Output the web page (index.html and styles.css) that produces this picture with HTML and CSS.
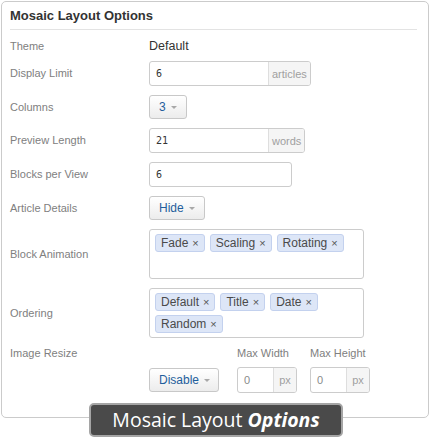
FILE: index.html
```html
<!DOCTYPE html>
<html>
<head>
<meta charset="utf-8">
<link rel="stylesheet" href="styles.css">
</head>
<body>
<div class="panel">
  <h2 class="title">Mosaic Layout Options</h2>
  <div class="form">
    <div class="row row-theme">
      <span class="label">Theme</span>
      <span class="value">Default</span>
    </div>
    <div class="row">
      <span class="label">Display Limit</span>
      <div class="input-group"><span class="field field-main mono">6</span><span class="addon">articles</span></div>
    </div>
    <div class="row">
      <span class="label">Columns</span>
      <div><span class="btn">3<i class="caret"></i></span></div>
    </div>
    <div class="row">
      <span class="label">Preview Length</span>
      <div class="input-group"><span class="field field-main mono">21</span><span class="addon">words</span></div>
    </div>
    <div class="row">
      <span class="label">Blocks per View</span>
      <div class="input-group"><span class="field field-wide mono">6</span></div>
    </div>
    <div class="row">
      <span class="label">Article Details</span>
      <div><span class="btn">Hide<i class="caret"></i></span></div>
    </div>
    <div class="row">
      <span class="label">Block Animation</span>
      <div class="tagbox">
        <span class="tag">Fade<span class="x">×</span></span>
        <span class="tag">Scaling<span class="x">×</span></span>
        <span class="tag">Rotating<span class="x">×</span></span>
      </div>
    </div>
    <div class="row">
      <span class="label">Ordering</span>
      <div class="tagbox">
        <span class="tag">Default<span class="x">×</span></span>
        <span class="tag">Title<span class="x">×</span></span>
        <span class="tag">Date<span class="x">×</span></span>
        <span class="tag">Random<span class="x">×</span></span>
      </div>
    </div>
    <div class="row row-top">
      <span class="label">Image Resize</span>
      <div class="resize">
        <span class="btn btn-disable">Disable<i class="caret"></i></span>
        <div class="group group-first">
          <span class="sublabel">Max Width</span>
          <div class="input-group input-tall"><span class="field field-small">0</span><span class="addon addon-px">px</span></div>
        </div>
        <div class="group">
          <span class="sublabel">Max Height</span>
          <div class="input-group input-tall"><span class="field field-small">0</span><span class="addon addon-px">px</span></div>
        </div>
      </div>
    </div>
  </div>
</div>
<div class="caption">Mosaic Layout <b><i>Options</i></b></div>
</body>
</html>
```

FILE: styles.css
```css
html, body {
  margin: 0;
  padding: 0;
  background: #fff;
}
body {
  font-family: "Liberation Sans", Arial, sans-serif;
  position: relative;
  width: 430px;
  height: 438px;
  overflow: hidden;
}
.panel {
  margin: 1px 0 0 1px;
  width: 428px;
  height: 417px;
  box-sizing: border-box;
  border: 1px solid #cbcbcb;
  border-radius: 5px;
  background: #fff;
  padding: 6px 0 0 8px;
}
.title {
  margin: 0 11px 0 0;
  padding: 0 0 5px 0;
  font-size: 13px;
  line-height: 16px;
  font-weight: bold;
  color: #333;
  border-bottom: 1px solid #e3e3e3;
}
.form {
  display: flex;
  flex-direction: column;
  gap: 9px;
  margin-top: 8px;
}
.row {
  display: grid;
  grid-template-columns: 139px 1fr;
  align-items: center;
}
.row-theme {
  height: 16px;
  margin-bottom: -2px;
}
.row-top {
  align-items: start;
}
.label {
  font-size: 11px;
  line-height: 13px;
  color: #808080;
}
.value {
  font-size: 12.5px;
  line-height: 16px;
  color: #333;
}
.input-group {
  display: inline-flex;
  height: 25px;
  box-sizing: border-box;
  border: 1px solid #cccccc;
  border-radius: 3px;
  overflow: hidden;
  width: max-content;
}
.input-tall {
  height: 26px;
}
.field {
  display: flex;
  align-items: center;
  padding-left: 6px;
  box-sizing: border-box;
  font-size: 11px;
  color: #444;
}
.mono {
  font-family: "DejaVu Sans Mono", "Liberation Mono", monospace;
  font-size: 10px;
  color: #333;
}
.field-main { width: 118px; }
.field-wide { width: 141px; }
.field-small {
  width: 35px;
  color: #8a8a8a;
  padding-left: 6px;
}
.addon {
  display: flex;
  align-items: center;
  justify-content: center;
  padding: 0 3px;
  background: #f5f5f5;
  border-left: 1px solid #dedede;
  font-size: 11px;
  color: #a0a0a0;
}
.addon-px {
  width: 23px;
  padding: 0;
  box-sizing: border-box;
}
.btn {
  display: inline-flex;
  align-items: center;
  height: 24px;
  box-sizing: border-box;
  padding: 0 9px;
  border: 1px solid #c8c8c8;
  border-radius: 3px;
  background: linear-gradient(#ffffff, #ececec);
  color: #1f5e9c;
  font-size: 12px;
}
.caret {
  display: inline-block;
  width: 0;
  height: 0;
  margin-left: 5px;
  margin-top: 1px;
  border-left: 3px solid transparent;
  border-right: 3px solid transparent;
  border-top: 3px solid #a8a8a8;
}
.tagbox {
  display: flex;
  flex-wrap: wrap;
  align-content: flex-start;
  gap: 4px 5px;
  width: 215px;
  height: 50px;
  box-sizing: border-box;
  padding: 4px 5px;
  border: 1px solid #cccccc;
  border-radius: 3px;
}
.tag {
  display: inline-flex;
  align-items: center;
  height: 18px;
  box-sizing: border-box;
  padding: 0 5px;
  background: #dde6f7;
  border: 1px solid #c3d1ee;
  border-radius: 3px;
  font-size: 12px;
  color: #4a4a4a;
}
.x {
  margin-left: 4px;
  font-size: 11px;
  color: #555;
}
.resize {
  display: flex;
  align-items: flex-end;
}
.btn-disable {
  margin-bottom: 1px;
  margin-right: 18px;
  width: 70px;
}
.group {
  display: flex;
  flex-direction: column;
  width: 60px;
}
.group-first {
  margin-right: 13px;
}
.sublabel {
  font-size: 11px;
  line-height: 13px;
  color: #808080;
  margin-bottom: 7px;
  white-space: nowrap;
}
.caption {
  position: absolute;
  left: 89px;
  top: 403px;
  width: 254px;
  height: 34px;
  box-sizing: border-box;
  border: 2px solid #a5a5a5;
  border-radius: 5px;
  background: #4a4a4a;
  color: #fff;
  font-family: "Open Sans", "Liberation Sans", sans-serif;
  font-size: 19.5px;
  line-height: 29px;
  text-align: center;
}
.caption b {
  font-weight: 700;
}
```
